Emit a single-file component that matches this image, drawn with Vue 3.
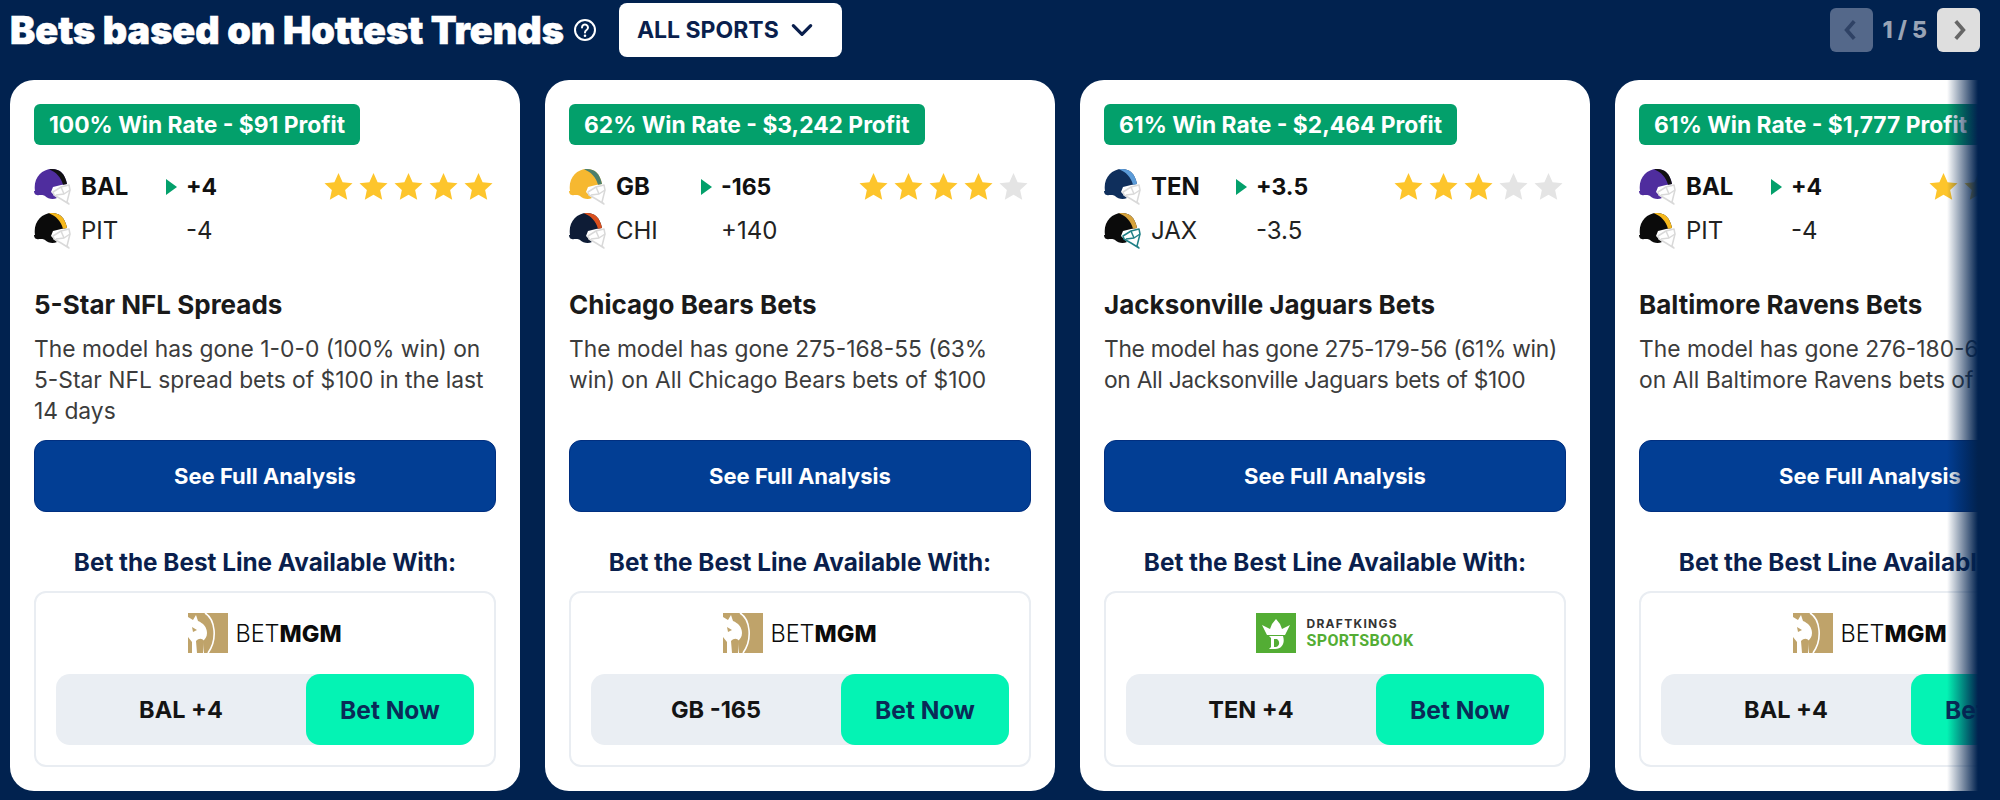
<script setup>
const navy = '#01224f'

const cards = [
  {
    badge: '100% Win Rate - $91 Profit',
    teams: [
      { name: 'BAL', odds: '+4', shell: '#4f2d9e', stripe: '#111111', mask: '#d9d9d9' },
      { name: 'PIT', odds: '-4', shell: '#0b0b0b', stripe: '#f6b81c', mask: '#d9d9d9' }
    ],
    rating: 5,
    title: '5-Star NFL Spreads',
    text: 'The model has gone 1-0-0 (100% win) on 5-Star NFL spread bets of $100 in the last 14 days',
    book: 'mgm',
    line: 'BAL +4'
  },
  {
    badge: '62% Win Rate - $3,242 Profit',
    teams: [
      { name: 'GB', odds: '-165', shell: '#f6b830', stripe: '#4b7f6d', mask: '#d9d9d9' },
      { name: 'CHI', odds: '+140', shell: '#0e1c36', stripe: '#d9501e', mask: '#d9d9d9' }
    ],
    rating: 4,
    title: 'Chicago Bears Bets',
    text: 'The model has gone 275-168-55 (63% win) on All Chicago Bears bets of $100',
    book: 'mgm',
    line: 'GB -165'
  },
  {
    badge: '61% Win Rate - $2,464 Profit',
    teams: [
      { name: 'TEN', odds: '+3.5', shell: '#0f2f5c', stripe: '#5b9bd8', mask: '#d9d9d9' },
      { name: 'JAX', odds: '-3.5', shell: '#0b0b0b', stripe: '#d6a23c', mask: '#1f7f86' }
    ],
    rating: 3,
    title: 'Jacksonville Jaguars Bets',
    text: 'The model has gone 275-179-56 (61% win) on All Jacksonville Jaguars bets of $100',
    tight: true,
    book: 'dk',
    line: 'TEN +4'
  },
  {
    badge: '61% Win Rate - $1,777 Profit',
    teams: [
      { name: 'BAL', odds: '+4', shell: '#4f2d9e', stripe: '#111111', mask: '#d9d9d9' },
      { name: 'PIT', odds: '-4', shell: '#0b0b0b', stripe: '#f6b81c', mask: '#d9d9d9' }
    ],
    rating: 2,
    title: 'Baltimore Ravens Bets',
    text: 'The model has gone 276-180-61 (61% win) on All Baltimore Ravens bets of $100',
    book: 'mgm',
    line: 'BAL +4'
  }
]
</script>

<template>
  <div class="page" :style="{ background: navy }">
    <header class="top">
      <h1>Bets based on Hottest Trends</h1>
      <svg class="help" viewBox="0 0 24 24" width="24" height="24">
        <circle cx="12" cy="12" r="10" fill="none" stroke="#fff" stroke-width="2" />
        <path d="M9 9.5a3 3 0 1 1 4.6 2.5c-1 .7-1.6 1.2-1.6 2.5" fill="none" stroke="#fff" stroke-width="2" stroke-linecap="round" />
        <circle cx="12" cy="17.8" r="1.3" fill="#fff" />
      </svg>
      <button class="sports">
        <span>ALL SPORTS</span>
        <svg viewBox="0 0 24 24" width="26" height="26"><path d="M4 8l8 8 8-8" fill="none" stroke="#0a1f4d" stroke-width="3" stroke-linecap="round" stroke-linejoin="round" /></svg>
      </button>
      <div class="pager">
        <button class="page-btn prev">
          <svg viewBox="0 0 24 24" width="26" height="26"><path d="M15 4l-7 8 7 8" fill="none" stroke="#2f4265" stroke-width="3.4" /></svg>
        </button>
        <span class="count">1 / 5</span>
        <button class="page-btn next">
          <svg viewBox="0 0 24 24" width="26" height="26"><path d="M9 4l7 8-7 8" fill="none" stroke="#666" stroke-width="3.4" /></svg>
        </button>
      </div>
    </header>

    <div class="carousel">
      <div class="track">
        <article v-for="card in cards" :key="card.title" class="card">
          <div class="badge">{{ card.badge }}</div>

          <div class="matchup">
            <div class="teams">
              <div v-for="(team, i) in card.teams" :key="team.name" class="team" :class="{ fav: i === 0 }">
                <svg class="helmet" viewBox="0 0 37 37" width="37" height="37">
                  <path d="M1 23C-1 11 7 1 18 1c8 0 13 5 15 15l-6 1-8 2-2 5 6 6c-4 2-9 1-12-2-3-2-7 0-8-1-2 0-3-2-3-4z" :fill="team.shell" />
                  <path d="M15 1.200C16 1 17 1 18 1c8 0 13 5 15 15l-4 .8C27 9 22 4 15 1.200z" :fill="team.stripe" />
                  <path d="M19 24l8-5 8-2 1 5-3 12 2 2-8-5-7-4z" fill="none" :stroke="team.mask" stroke-width="1.500" stroke-linejoin="round" />
                  <path d="M27 19l3 7 6-4M22 27l8-1" fill="none" :stroke="team.mask" stroke-width="1.500" />
                </svg>
                <span class="abbr">{{ team.name }}</span>
                <span class="arrow"></span>
                <span class="odds">{{ team.odds }}</span>
              </div>
            </div>
            <div class="stars">
              <svg v-for="n in 5" :key="n" viewBox="0 0 24 24" width="29" height="29">
                <path d="M12 .8l3.400 7.600 8.200.9-6.100 5.500 1.700 8.100L12 18.800l-7.200 4.100 1.700-8.100L.4 9.300l8.200-.9z" :fill="n <= card.rating ? '#fdc52c' : '#e4e4e4'" />
              </svg>
            </div>
          </div>

          <h2>{{ card.title }}</h2>
          <p class="desc" :class="{ tight: card.tight }">{{ card.text }}</p>
          <button class="analysis">See Full Analysis</button>

          <h3>Bet the Best Line Available With:</h3>
          <div class="book-box">
            <div v-if="card.book === 'mgm'" class="logo">
              <svg viewBox="0 0 40 40" width="40" height="40">
                <rect width="40" height="40" fill="#bfa36a" />
                <path d="M17 0c10 6 13 26 3 40" fill="none" stroke="#fff" stroke-width="1.600" />
                <path d="M0 4l5 3 3-5 2 6c5 2 9 6 9 12 0 4-2 6-4 8l1 12H4l-1-7-3-3z" fill="#fff" />
                <path d="M4 14l5 3-4 2zM8 28c3-3 6-3 8 0l-1 12H9zM0 24l4 5v11H0z" fill="#bfa36a" />
              </svg>
              <span class="mgm"><span class="bet">BET</span>MGM</span>
            </div>
            <div v-else class="logo">
              <svg viewBox="0 0 40 40" width="40" height="40">
                <rect width="40" height="40" fill="#53ad34" />
                <path d="M6 12l8 4 2-5 4-5 4 5 2 5 8-4-5 10H11z" fill="#fff" />
                <path d="M13 23h14c2 6 0 13-8 13h-6l2-2v-9z" fill="#fff" />
                <path d="M18 26h3c3 2 3 7-1 8h-2z" fill="#53ad34" />
              </svg>
              <span class="dk">
                <span class="dk-top">DRAFTKINGS</span>
                <span class="dk-bottom">SPORTSBOOK</span>
              </span>
            </div>
            <div class="bet-row">
              <span class="line">{{ card.line }}</span>
              <button class="bet-now">Bet Now</button>
            </div>
          </div>
        </article>
      </div>
      <div class="fade"></div>
    </div>
  </div>
</template>

<style>
html, body {
  background: #01224f;
  overflow: hidden;
}
</style>

<style scoped>
.page {
  width: 2000px;
  height: 800px;
  font-family: Inter, "Liberation Sans", sans-serif;
  overflow: hidden;
}

.top {
  display: flex;
  align-items: center;
  height: 60px;
  margin-bottom: 20px;
  padding: 0 20px 0 10px;
}

h1 {
  margin: 0;
  font-size: 37.800px;
  font-weight: 900;
  color: #fff;
  white-space: nowrap;
  -webkit-text-stroke: 0.6px #fff;
}

.help {
  margin-left: 9px;
}

.sports {
  display: flex;
  align-items: center;
  gap: 10px;
  height: 54px;
  width: 223px;
  margin-left: 22px;
  padding: 0 0 0 18px;
  border: 0;
  border-radius: 8px;
  background: #fff;
  color: #0a1f4d;
  font: 700 23px Inter, sans-serif;
  white-space: nowrap;
}

.pager {
  display: flex;
  align-items: center;
  gap: 10px;
  margin-left: auto;
}

.page-btn {
  display: flex;
  align-items: center;
  justify-content: center;
  width: 43px;
  height: 44px;
  padding: 0;
  border: 0;
  border-radius: 6px;
}

.prev {
  background: #54688a;
}

.next {
  background: #dedede;
}

.count {
  color: #98a3b5;
  font-size: 23px;
  font-weight: 800;
}

.carousel {
  position: relative;
  width: 1978px;
  overflow: hidden;
}

.track {
  display: flex;
  gap: 25px;
  padding-left: 10px;
}

.card {
  flex: 0 0 510px;
  box-sizing: border-box;
  height: 711px;
  padding: 24px;
  border-radius: 24px;
  background: #fff;
}

.fade {
  position: absolute;
  top: 0;
  right: 0;
  bottom: 0;
  width: 31px;
  background: linear-gradient(to right, rgba(1, 34, 79, 0), #01224f);
}

.badge {
  display: inline-block;
  height: 41px;
  padding: 0 15px;
  border-radius: 6px;
  background: #03a06b;
  color: #fff;
  font-size: 22.800px;
  font-weight: 700;
  line-height: 41px;
  white-space: nowrap;
}

.matchup {
  display: flex;
  justify-content: space-between;
  margin-top: 23px;
}

.teams {
  display: flex;
  flex-direction: column;
  gap: 7px;
}

.team {
  display: flex;
  align-items: center;
  height: 37px;
  color: #222;
  font-size: 24px;
}

.team.fav {
  color: #111;
  font-weight: 700;
}

.team.fav .odds {
  font-size: 23px;
}

.helmet {
  flex: none;
  margin-right: 10px;
}

.abbr {
  width: 85px;
}

.arrow {
  width: 20px;
}

.team.fav .arrow::before {
  content: "";
  display: block;
  width: 0;
  height: 0;
  border-left: 11px solid #03a06b;
  border-top: 8px solid transparent;
  border-bottom: 8px solid transparent;
}

.stars {
  display: flex;
  gap: 6px;
  height: 37px;
  align-items: center;
  margin-right: 3px;
}

h2 {
  margin: 41px 0 0;
  height: 30px;
  color: #1a1a1a;
  font-size: 26px;
  font-weight: 700;
  line-height: 30px;
  white-space: nowrap;
}

.desc {
  height: 93px;
  margin: 13px 0 0;
  color: #3c3c3c;
  font-size: 22.800px;
  line-height: 31px;
}

.desc.tight {
  letter-spacing: -0.3px;
}

.analysis {
  display: block;
  width: 100%;
  height: 72px;
  margin-top: 14px;
  border: 1px solid #012f80;
  border-radius: 12px;
  background: #023e94;
  color: #fff;
  font: 700 22px Inter, sans-serif;
}

h3 {
  margin: 36px 0 0;
  color: #0a1f4d;
  font-size: 24.300px;
  font-weight: 700;
  line-height: 28px;
  text-align: center;
  white-space: nowrap;
}

.book-box {
  box-sizing: border-box;
  height: 176px;
  margin-top: 15px;
  padding: 20px;
  border: 2px solid #e9edf2;
  border-radius: 12px;
}

.logo {
  display: flex;
  align-items: center;
  justify-content: center;
  gap: 7px;
  height: 40px;
}

.mgm {
  color: #0b0b0b;
  font-size: 23.500px;
  font-weight: 800;
}

.bet {
  font-weight: 300;
}

.dk {
  display: flex;
  flex-direction: column;
  gap: 2px;
  margin-left: 3px;
}

.dk-top {
  color: #333;
  font-size: 12px;
  font-weight: 700;
  letter-spacing: 1.300px;
  line-height: 14px;
}

.dk-bottom {
  color: #53ad34;
  font-family: Roboto, sans-serif;
  font-size: 16px;
  font-weight: 700;
  letter-spacing: 0.4px;
  line-height: 16px;
}

.bet-row {
  display: flex;
  height: 71px;
  margin-top: 21px;
  border-radius: 14px;
  background: #eaeef3;
}

.line {
  flex: 1;
  color: #141414;
  font-size: 23.500px;
  font-weight: 700;
  line-height: 71px;
  text-align: center;
}

.bet-now {
  flex: 0 0 168px;
  border: 0;
  border-radius: 14px;
  background: #04f3b4;
  color: #0a2a57;
  font: 700 24.500px Inter, sans-serif;
}
</style>
